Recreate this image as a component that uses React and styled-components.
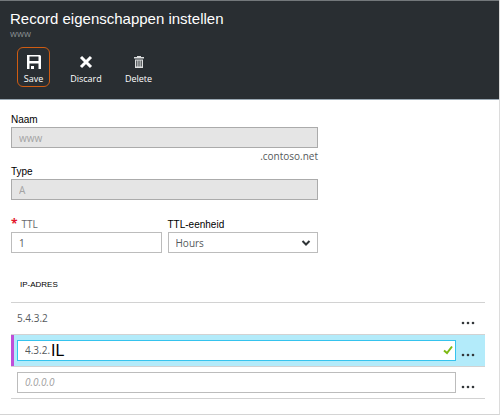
import React from "react";
import styled, { createGlobalStyle } from "styled-components";

const GlobalStyle = createGlobalStyle`
  *, *::before, *::after { box-sizing: border-box; }
  body {
    margin: 0;
    background: #fff;
    color: #55595c;
    font: 10px/16px "Open Sans", "Noto Sans", sans-serif;
  }
  input, select, button { font: inherit; color: inherit; }
`;

const Blade = styled.main`
  border-right: 1px solid #dcdcdc;
  border-bottom: 1px solid #d4d4d4;
`;

const Header = styled.header`
  padding: 9px 10px 12px;
  background: #292e32;
  color: #fff;
  border-top: 1px solid #73787b;
  border-bottom: 1px solid #9aa8b3;
`;

const Title = styled.h1`
  margin: 0;
  font: 400 15px/18px "Liberation Sans", Arial, sans-serif;
`;

const Subtitle = styled.p`
  margin: 0;
  font-size: 9px;
  line-height: 12px;
  color: #888d90;
`;

const Toolbar = styled.div`
  display: flex;
  gap: 14px;
  margin-top: 7px;
  padding-left: 7px;
`;

const ToolButton = styled.button`
  display: flex;
  flex-direction: column;
  align-items: center;
  gap: 2px;
  width: ${({ $wide }) => ($wide ? "44px" : "33px")};
  height: 40px;
  padding: 6px 0 0;
  border: 1px solid ${({ $active }) => ($active ? "#cf5c12" : "transparent")};
  border-radius: 6px;
  background: none;
  color: #fff;
  font-size: 9px;
  line-height: 14px;

  svg { display: block; }
`;

const Content = styled.div`
  padding: 13px 14px 15px 11px;
`;

const Form = styled.form`
  max-width: 307px;
`;

const Field = styled.div`
  flex: 1;
  display: flex;
  flex-direction: column;
`;

const Label = styled.label`
  height: 14px;
  font: 10px/14px "Liberation Sans", Arial, sans-serif;
  color: #000;
`;

const PlainLabel = styled.label`
  height: 14px;
  line-height: 12px;
  color: #66696c;

  span {
    margin-right: 4px;
    color: #e3172d;
    font-size: 12px;
    font-weight: 700;
  }
`;

const TextInput = styled.input`
  width: 100%;
  height: 21px;
  padding: 0 7px;
  border: 1px solid #bcbcbc;
  border-radius: 0;
  background: #fff;
  outline: none;

  &:disabled {
    background: #e5e5e5;
    border-color: #ababab;
    color: #a3a3a3;
  }
  &::placeholder {
    color: #a0a0a0;
    font-style: italic;
    opacity: 1;
  }
`;

const Suffix = styled.p`
  margin: 0;
  height: 17px;
  line-height: 17px;
  text-align: right;
`;

const FieldPair = styled.div`
  display: flex;
  gap: 6px;
  margin-top: 18px;
`;

const SelectBox = styled.div`
  position: relative;

  svg {
    position: absolute;
    top: 7px;
    right: 7px;
    pointer-events: none;
  }
`;

const Select = styled.select`
  width: 100%;
  height: 21px;
  padding: 0 7px;
  border: 1px solid #bcbcbc;
  border-radius: 0;
  background: #fff;
  appearance: none;
`;

const AddressTable = styled.table`
  width: 100%;
  margin-top: 16px;
  border-collapse: collapse;
`;

const HeadCell = styled.th`
  height: 33px;
  padding: 0 9px;
  text-align: left;
  font: 400 8px/12px "Liberation Sans", Arial, sans-serif;
  color: #000;
`;

const Row = styled.tr`
  height: 32px;
  border-top: 1px solid #d2d2d2;
  border-bottom: 1px solid #d2d2d2;
  background: ${({ $selected }) => ($selected ? "#b3ebfa" : "none")};
  box-shadow: ${({ $selected }) => ($selected ? "inset 3px 0 #bf4fd8" : "none")};
`;

const AddressCell = styled.td`
  padding: 0 0 0 6px;
`;

const MenuCell = styled.td`
  width: 29px;
  padding: 9px 0 0 5px;
`;

const MenuButton = styled.button`
  display: block;
  padding: 0;
  border: 0;
  background: none;
  color: #33373a;

  svg { display: block; }
`;

const EditBox = styled.div`
  display: flex;
  align-items: center;
  height: 21px;
  padding: 0 2px 0 7px;
  border: 1px solid #35c3ee;
  background: #fff;

  svg { margin-left: auto; }
`;

const EditInput = styled.input`
  width: 26px;
  height: 19px;
  padding: 0;
  border: 0;
  outline: none;
  background: none;
`;

const Typed = styled.span`
  font: 16px/19px "Liberation Sans", Arial, sans-serif;
  color: #000;
`;

const SaveIcon = () => (
  <svg width="16" height="16" viewBox="0 0 16 16" aria-hidden="true">
    <path fill="#fff" fillRule="evenodd" d="M1 1h13l1 1V15h-2.500V9.500H3.500V15H1zM3.500 2.500v4.500h9V2.500zM5 12h3v3H5z" />
  </svg>
);

const DiscardIcon = () => (
  <svg width="16" height="16" viewBox="0 0 16 16" aria-hidden="true">
    <path d="M3 3l10 10M13 3L3 13" stroke="#fff" strokeWidth="3" />
  </svg>
);

const DeleteIcon = () => (
  <svg width="16" height="16" viewBox="0 0 16 16" aria-hidden="true">
    <path
      fill="#dcdedf"
      fillRule="evenodd"
      d="M6 2h4v1h3v1.500H3V3h3zM4 5.500h8V14H4zM5.300 6.500v6h1v-6zM7.500 6.500v6h1v-6zM9.700 6.500v6h1v-6z"
    />
  </svg>
);

const Chevron = () => (
  <svg width="10" height="8" viewBox="0 0 10 8" aria-hidden="true">
    <path d="M1.500 2l3.500 3.500L8.500 2" fill="none" stroke="#2f3437" strokeWidth="2" />
  </svg>
);

const Check = () => (
  <svg width="10" height="10" viewBox="0 0 10 10" aria-hidden="true">
    <path d="M1 5.500l3 2.500L9 1.500" fill="none" stroke="#7db912" strokeWidth="2" />
  </svg>
);

const Dots = () => (
  <svg width="14" height="4" viewBox="0 0 14 4" aria-hidden="true" fill="currentColor">
    <circle cx="2" cy="2" r="1.300" />
    <circle cx="7" cy="2" r="1.300" />
    <circle cx="12" cy="2" r="1.300" />
  </svg>
);

const RowMenu = () => (
  <MenuCell>
    <MenuButton type="button" aria-label="Menu"><Dots /></MenuButton>
  </MenuCell>
);

export default function App() {
  return (
    <>
      <GlobalStyle />
      <Blade>
        <Header>
          <Title>Record eigenschappen instellen</Title>
          <Subtitle>www</Subtitle>
          <Toolbar>
            <ToolButton type="button" $active><SaveIcon />Save</ToolButton>
            <ToolButton type="button" $wide><DiscardIcon />Discard</ToolButton>
            <ToolButton type="button"><DeleteIcon />Delete</ToolButton>
          </Toolbar>
        </Header>
        <Content>
          <Form>
            <Field>
              <Label htmlFor="name">Naam</Label>
              <TextInput id="name" defaultValue="www" disabled />
            </Field>
            <Suffix>.contoso.net</Suffix>
            <Field>
              <Label htmlFor="type">Type</Label>
              <TextInput id="type" defaultValue="A" disabled />
            </Field>
            <FieldPair>
              <Field>
                <PlainLabel htmlFor="ttl"><span>*</span>TTL</PlainLabel>
                <TextInput id="ttl" defaultValue="1" />
              </Field>
              <Field>
                <Label htmlFor="unit">TTL-eenheid</Label>
                <SelectBox>
                  <Select id="unit" defaultValue="Hours"><option>Hours</option></Select>
                  <Chevron />
                </SelectBox>
              </Field>
            </FieldPair>
          </Form>
          <AddressTable>
            <thead>
              <tr><HeadCell colSpan={2}>IP-ADRES</HeadCell></tr>
            </thead>
            <tbody>
              <Row>
                <AddressCell>5.4.3.2</AddressCell>
                <RowMenu />
              </Row>
              <Row $selected>
                <AddressCell>
                  <EditBox>
                    <EditInput aria-label="IP-adres" defaultValue="4.3.2." />
                    <Typed>IL</Typed>
                    <Check />
                  </EditBox>
                </AddressCell>
                <RowMenu />
              </Row>
              <Row>
                <AddressCell>
                  <TextInput aria-label="IP-adres" placeholder="0.0.0.0" />
                </AddressCell>
                <RowMenu />
              </Row>
            </tbody>
          </AddressTable>
        </Content>
      </Blade>
    </>
  );
}
